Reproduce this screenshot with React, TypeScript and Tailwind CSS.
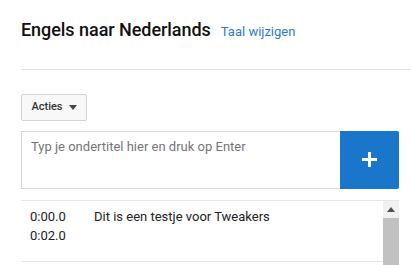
export default function App() {
	return (
		<div className="h-[265px] w-[411px] overflow-hidden bg-white font-['Roboto',sans-serif]">
			{/* Header */}
			<div className="flex items-baseline gap-[10px] pl-[21px] pt-[18px]">
				<h1 className="text-[18px] font-medium leading-[23px] tracking-[-0.05px] text-[#111]">
					Engels naar Nederlands
				</h1>
				<a className="text-[13px] text-[#2a7ad3]">Taal wijzigen</a>
			</div>
			<div className="ml-[21px] mt-[27px] h-px bg-[#e0e0e0]" />

			{/* Actions */}
			<div className="pl-[21px] pt-[24px]">
				<button className="flex h-[27px] w-[66px] items-center justify-center gap-[6px] rounded-[2px] border border-[#d3d3d3] bg-[#f8f8f8] text-[11px] font-medium text-[#333]">
					Acties
					<svg width="8" height="5" viewBox="0 0 8 5">
						<path d="M0 0h8L4 5z" fill="#444" />
					</svg>
				</button>
			</div>

			{/* Input */}
			<div className="ml-[21px] mt-[10px] flex h-[58px] w-[378px]">
				<div className="flex-1 border border-r-0 border-[#d6d6d6] px-[9px] pt-[5px] text-[13px] text-[#757575]">
					Typ je ondertitel hier en druk op Enter
				</div>
				<button className="flex w-[59px] items-center justify-center rounded-r-[2px] bg-[#1976cb]">
					<svg width="17" height="17" viewBox="0 0 17 17">
						<path d="M7 1h3v6h6v3h-6v6H7v-6H1V7h6z" fill="white" />
					</svg>
				</button>
			</div>

			{/* List */}
			<div className="ml-[21px] mt-[11px] flex w-[378px] border-t border-[#e6e6e6]">
				<div className="flex-1">
					<div className="flex h-[61px] border-b border-[#e6e6e6] pl-[9px] pt-[6px] text-[13px] leading-[19px] text-[#222]">
						<div className="w-[64px]">
							<div>0:00.0</div>
							<div>0:02.0</div>
						</div>
						<div>Dit is een testje voor Tweakers</div>
					</div>
				</div>
				<div className="flex w-[16px] flex-col bg-[#f1f1f1]">
					<div className="flex h-[17px] items-center justify-center">
						<svg width="8" height="5" viewBox="0 0 8 5">
							<path d="M0 5L4 0l4 5z" fill="#505050" />
						</svg>
					</div>
					<div className="h-[60px] bg-[#c1c1c1]" />
				</div>
			</div>
		</div>
	);
}
